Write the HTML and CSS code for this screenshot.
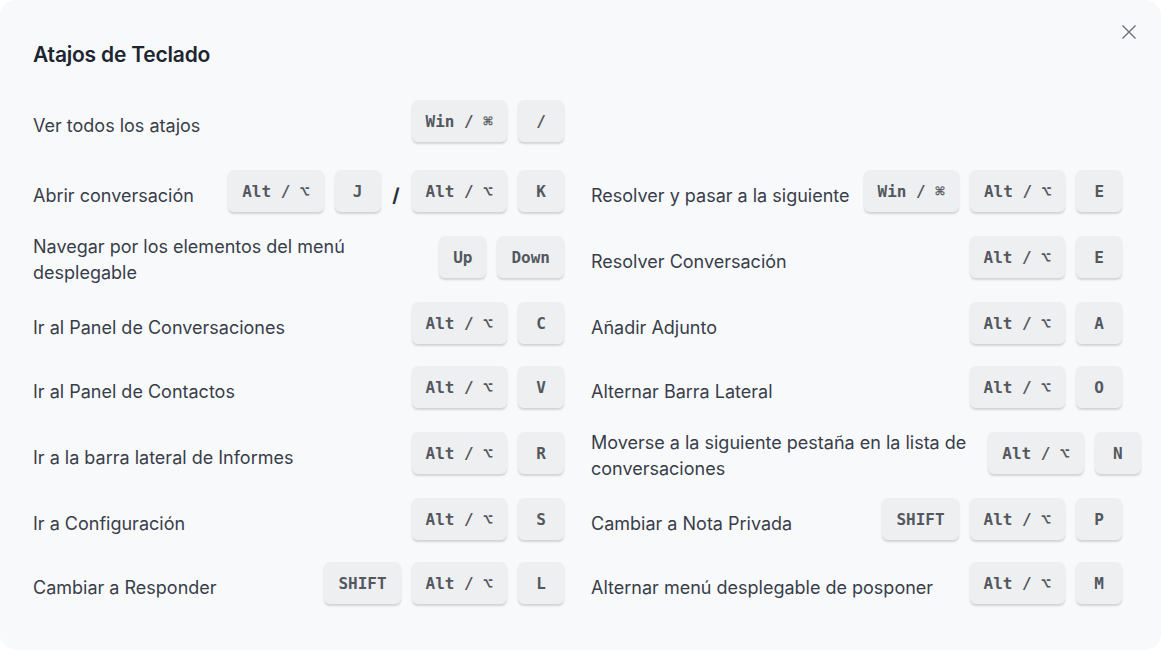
FILE: index.html
```html
<!DOCTYPE html>
<html>
<head>
<meta charset="utf-8">
<title>Atajos de Teclado</title>
<link rel="stylesheet" href="styles.css">
</head>
<body>
  <div class="modal">
    <button class="close" aria-label="Cerrar">
      <svg width="16" height="16" viewBox="0 0 16 16"><path d="M1.5 1.5 L14.5 14.5 M14.5 1.5 L1.5 14.5"/></svg>
    </button>
    <h2 class="title">Atajos de Teclado</h2>

    <div class="shortcut head">
      <span class="label">Ver todos los atajos</span>
      <span class="keys"><kbd>Win / ⌘</kbd><kbd>/</kbd></span>
    </div>

    <div class="grid">
      <div class="shortcut">
        <span class="label">Abrir conversación</span>
        <span class="keys"><kbd>Alt / ⌥</kbd><kbd>J</kbd><span class="sep">/</span><kbd>Alt / ⌥</kbd><kbd>K</kbd></span>
      </div>
      <div class="shortcut">
        <span class="label">Resolver y pasar a la siguiente</span>
        <span class="keys"><kbd>Win / ⌘</kbd><kbd>Alt / ⌥</kbd><kbd>E</kbd></span>
      </div>

      <div class="shortcut">
        <span class="label two">Navegar por los elementos del menú<br>desplegable</span>
        <span class="keys"><kbd>Up</kbd><kbd>Down</kbd></span>
      </div>
      <div class="shortcut">
        <span class="label">Resolver Conversación</span>
        <span class="keys"><kbd>Alt / ⌥</kbd><kbd>E</kbd></span>
      </div>

      <div class="shortcut">
        <span class="label">Ir al Panel de Conversaciones</span>
        <span class="keys"><kbd>Alt / ⌥</kbd><kbd>C</kbd></span>
      </div>
      <div class="shortcut">
        <span class="label">Añadir Adjunto</span>
        <span class="keys"><kbd>Alt / ⌥</kbd><kbd>A</kbd></span>
      </div>

      <div class="shortcut">
        <span class="label">Ir al Panel de Contactos</span>
        <span class="keys"><kbd>Alt / ⌥</kbd><kbd>V</kbd></span>
      </div>
      <div class="shortcut">
        <span class="label">Alternar Barra Lateral</span>
        <span class="keys"><kbd>Alt / ⌥</kbd><kbd>O</kbd></span>
      </div>

      <div class="shortcut">
        <span class="label">Ir a la barra lateral de Informes</span>
        <span class="keys"><kbd>Alt / ⌥</kbd><kbd>R</kbd></span>
      </div>
      <div class="shortcut">
        <span class="label two long">Moverse a la siguiente pestaña en la lista de<br>conversaciones</span>
        <span class="keys"><kbd>Alt / ⌥</kbd><kbd>N</kbd></span>
      </div>

      <div class="shortcut">
        <span class="label">Ir a Configuración</span>
        <span class="keys"><kbd>Alt / ⌥</kbd><kbd>S</kbd></span>
      </div>
      <div class="shortcut">
        <span class="label">Cambiar a Nota Privada</span>
        <span class="keys"><kbd>SHIFT</kbd><kbd>Alt / ⌥</kbd><kbd>P</kbd></span>
      </div>

      <div class="shortcut">
        <span class="label">Cambiar a Responder</span>
        <span class="keys"><kbd>SHIFT</kbd><kbd>Alt / ⌥</kbd><kbd>L</kbd></span>
      </div>
      <div class="shortcut">
        <span class="label">Alternar menú desplegable de posponer</span>
        <span class="keys"><kbd>Alt / ⌥</kbd><kbd>M</kbd></span>
      </div>
    </div>
  </div>
</body>
</html>
```

FILE: styles.css
```css
/* modal de atajos */
body {
  margin: 0;
  background: #fff;
  font-family: Inter, "Noto Sans", sans-serif;
}
.modal {
  position: relative;
  box-sizing: border-box;
  width: 1161px;
  height: 650px;
  padding: 40px 39px 0 33px;
  background: #f8f9fb;
  border-radius: 16px;
}
.close {
  position: absolute;
  top: 24px;
  right: 24px;
  padding: 0;
  border: 0;
  background: none;
  line-height: 0;
}
.close path { stroke: #6b7079; stroke-width: 1.4; fill: none; }

.title {
  margin: 0 0 30px;
  font-size: 21px;
  line-height: 30px;
  font-weight: 600;
  letter-spacing: -0.2px;
  color: #1d2530;
}

.grid {
  display: grid;
  grid-template-columns: 531px 531px;
  column-gap: 27px;
  row-gap: 16px;
  margin-top: 22px;
}
.shortcut {
  display: flex;
  align-items: center;
  justify-content: space-between;
  gap: 14px;
  min-height: 48px;
}
.head { width: 531px; }

.label {
  flex: none;
  margin: 2px 0 -2px;
  white-space: nowrap;
  font-size: 18px;
  line-height: 26px;
  color: #383e49;
}
.label.two { margin: 0; }
.label.long { padding-right: 8px; }
.keys {
  flex: none;
  display: flex;
  align-items: center;
  gap: 11px;
  padding-bottom: 6px;
}
kbd {
  box-sizing: border-box;
  min-width: 46px;
  height: 42px;
  padding: 0 14px;
  display: flex;
  align-items: center;
  justify-content: center;
  background: #eeeff1;
  border-radius: 6px;
  box-shadow: 0 2px 2px rgba(40, 48, 60, 0.18);
  font-family: "DejaVu Sans Mono", "Liberation Mono", monospace;
  font-size: 16px;
  font-weight: bold;
  color: #53585f;
}
.sep {
  width: 9px;
  margin-top: 8px;
  font-size: 19px;
  font-weight: 700;
  color: #2a2f38;
  text-align: center;
}
```
